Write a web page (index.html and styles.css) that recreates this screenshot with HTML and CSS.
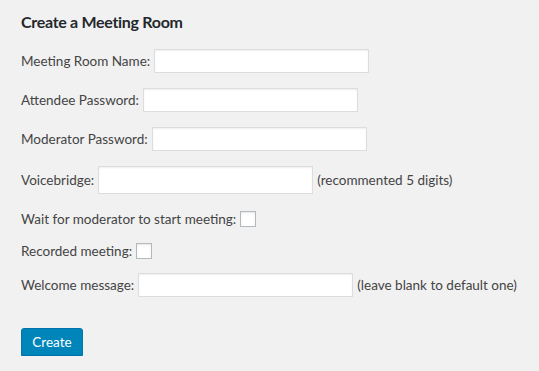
FILE: index.html
```html
<!DOCTYPE html>
<html lang="en">
<head>
<meta charset="utf-8">
<title>Create a Meeting Room</title>
<link rel="stylesheet" href="styles.css">
</head>
<body>
<div class="wrap">
  <h2 class="title">Create a Meeting Room</h2>
  <form class="form">
    <div class="row">
      <label class="label" for="name">Meeting Room Name:</label>
      <input class="text" type="text" id="name">
    </div>
    <div class="row">
      <label class="label" for="attendee">Attendee Password:</label>
      <input class="text" type="text" id="attendee">
    </div>
    <div class="row">
      <label class="label" for="moderator">Moderator Password:</label>
      <input class="text" type="text" id="moderator">
    </div>
    <div class="row">
      <label class="label" for="voice">Voicebridge:</label>
      <input class="text tall" type="text" id="voice">
      <span class="hint">(recommented 5 digits)</span>
    </div>
    <div class="row check-row">
      <label class="label" for="wait">Wait for moderator to start meeting:</label>
      <input class="check" type="checkbox" id="wait">
    </div>
    <div class="row check-row tight">
      <label class="label" for="recorded">Recorded meeting:</label>
      <input class="check" type="checkbox" id="recorded">
    </div>
    <div class="row tight">
      <label class="label" for="welcome">Welcome message:</label>
      <input class="text" type="text" id="welcome">
      <span class="hint">(leave blank to default one)</span>
    </div>
    <div class="actions">
      <button class="button-primary" type="button">Create</button>
    </div>
  </form>
</div>
</body>
</html>
```
FILE: styles.css
```css
html, body {
  margin: 0;
  padding: 0;
  background: #f1f1f1;
}
body {
  font-family: Lato, "Open Sans", sans-serif;
  font-size: 13.5px;
  color: #444;
}
.wrap {
  padding: 10px 21px 0 21px;
}
.title {
  margin: 0;
  font-size: 16px;
  line-height: 24px;
  font-weight: 700;
  letter-spacing: -0.3px;
  color: #23282d;
}
.form {
  display: flex;
  flex-direction: column;
  margin-top: 15px;
}
.row {
  display: flex;
  align-items: center;
  gap: 4px;
  margin-top: 15px;
}
.row:first-child {
  margin-top: 0;
}
.check-row {
  height: 20px;
}
.tight {
  margin-top: 12px;
}
.label {
  white-space: nowrap;
}
.text {
  box-sizing: border-box;
  width: 215px;
  height: 24px;
  margin: 0;
  padding: 2px 6px;
  border: 1px solid #ddd;
  border-radius: 0;
  background: #fff;
  box-shadow: inset 0 1px 2px rgba(0, 0, 0, 0.07);
  font: inherit;
  color: #32373c;
  outline: none;
}
.text.tall {
  height: 28px;
}
.check {
  -webkit-appearance: none;
  appearance: none;
  box-sizing: border-box;
  width: 16px;
  height: 16px;
  margin: 0;
  border: 1px solid #b4b9be;
  background: #fff;
  box-shadow: inset 0 1px 2px rgba(0, 0, 0, 0.1);
}
.hint {
  white-space: nowrap;
}
.actions {
  margin-top: 31px;
}
.button-primary {
  box-sizing: border-box;
  height: 28px;
  width: 62px;
  padding: 0 0 1px;
  border: 1px solid #0073aa;
  border-radius: 3px;
  background: #0085ba;
  box-shadow: 0 1px 0 #006799;
  color: #fff;
  font-family: inherit;
  font-size: 13.5px;
  line-height: 26px;
  text-align: center;
  cursor: pointer;
}
```
